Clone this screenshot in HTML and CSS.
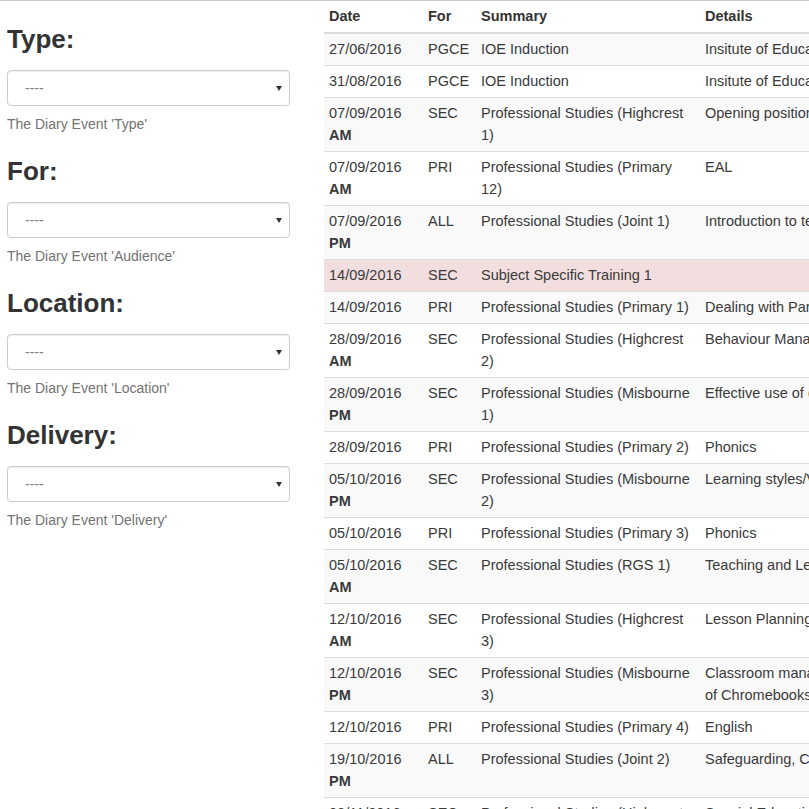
FILE: index.html
```html
<!DOCTYPE html>
<html lang="en">
<head>
<meta charset="utf-8">
<title>Diary Events</title>
<link rel="stylesheet" href="styles.css">
</head>
<body>
<div class="layout">
  <aside class="filters">
    <div class="filter-group">
      <h3 class="filter-title">Type:</h3>
      <div class="select"><span class="select-value">----</span><svg class="select-arrow" width="6" height="5" viewBox="0 0 6 5"><polygon points="0,0 6,0 3,5"/></svg></div>
      <p class="help">The Diary Event 'Type'</p>
    </div>
    <div class="filter-group">
      <h3 class="filter-title">For:</h3>
      <div class="select"><span class="select-value">----</span><svg class="select-arrow" width="6" height="5" viewBox="0 0 6 5"><polygon points="0,0 6,0 3,5"/></svg></div>
      <p class="help">The Diary Event 'Audience'</p>
    </div>
    <div class="filter-group">
      <h3 class="filter-title">Location:</h3>
      <div class="select"><span class="select-value">----</span><svg class="select-arrow" width="6" height="5" viewBox="0 0 6 5"><polygon points="0,0 6,0 3,5"/></svg></div>
      <p class="help">The Diary Event 'Location'</p>
    </div>
    <div class="filter-group">
      <h3 class="filter-title">Delivery:</h3>
      <div class="select"><span class="select-value">----</span><svg class="select-arrow" width="6" height="5" viewBox="0 0 6 5"><polygon points="0,0 6,0 3,5"/></svg></div>
      <p class="help">The Diary Event 'Delivery'</p>
    </div>
  </aside>
  <main class="table-wrap">
    <table class="events">
      <colgroup>
        <col class="col-date">
        <col class="col-for">
        <col class="col-summary">
        <col class="col-details">
      </colgroup>
      <thead>
        <tr><th>Date</th><th>For</th><th>Summary</th><th>Details</th></tr>
      </thead>
      <tbody>
        <tr><td>27/06/2016</td><td>PGCE</td><td>IOE Induction</td><td>Insitute of Education</td></tr>
        <tr><td>31/08/2016</td><td>PGCE</td><td>IOE Induction</td><td>Insitute of Education</td></tr>
        <tr><td>07/09/2016 <b>AM</b></td><td>SEC</td><td>Professional Studies (Highcrest 1)</td><td>Opening positions</td></tr>
        <tr><td>07/09/2016 <b>AM</b></td><td>PRI</td><td>Professional Studies (Primary 12)</td><td>EAL</td></tr>
        <tr><td>07/09/2016 <b>PM</b></td><td>ALL</td><td>Professional Studies (Joint 1)</td><td>Introduction to teaching</td></tr>
        <tr class="danger"><td>14/09/2016</td><td>SEC</td><td>Subject Specific Training 1</td><td></td></tr>
        <tr><td>14/09/2016</td><td>PRI</td><td>Professional Studies (Primary 1)</td><td>Dealing with Parents</td></tr>
        <tr><td>28/09/2016 <b>AM</b></td><td>SEC</td><td>Professional Studies (Highcrest 2)</td><td>Behaviour Management</td></tr>
        <tr><td>28/09/2016 <b>PM</b></td><td>SEC</td><td>Professional Studies (Misbourne 1)</td><td>Effective use of questioning</td></tr>
        <tr><td>28/09/2016</td><td>PRI</td><td>Professional Studies (Primary 2)</td><td>Phonics</td></tr>
        <tr><td>05/10/2016 <b>PM</b></td><td>SEC</td><td>Professional Studies (Misbourne 2)</td><td>Learning styles/VAK</td></tr>
        <tr><td>05/10/2016</td><td>PRI</td><td>Professional Studies (Primary 3)</td><td>Phonics</td></tr>
        <tr><td>05/10/2016 <b>AM</b></td><td>SEC</td><td>Professional Studies (RGS 1)</td><td>Teaching and Learning</td></tr>
        <tr><td>12/10/2016 <b>AM</b></td><td>SEC</td><td>Professional Studies (Highcrest 3)</td><td>Lesson Planning</td></tr>
        <tr><td>12/10/2016 <b>PM</b></td><td>SEC</td><td>Professional Studies (Misbourne 3)</td><td>Classroom management and use of Chromebooks</td></tr>
        <tr><td>12/10/2016</td><td>PRI</td><td>Professional Studies (Primary 4)</td><td>English</td></tr>
        <tr><td>19/10/2016 <b>PM</b></td><td>ALL</td><td>Professional Studies (Joint 2)</td><td>Safeguarding, Child Protection</td></tr>
        <tr><td>02/11/2016 <b>AM</b></td><td>SEC</td><td>Professional Studies (Highcrest 4)</td><td>Special Educational Needs</td></tr>
      </tbody>
    </table>
  </main>
</div>
</body>
</html>
```
FILE: styles.css
```css
html, body {
  margin: 0;
  padding: 0;
}

body {
  border-top: 1px solid #cccccc;
  font-family: "Liberation Sans", Arial, Helvetica, sans-serif;
  font-size: 14px;
  color: #333333;
  background: #ffffff;
  overflow: hidden;
}

.layout {
  display: flex;
  align-items: flex-start;
  padding-left: 7px;
}

.filters {
  flex: none;
  width: 283px;
  display: flex;
  flex-direction: column;
  gap: 23px;
  padding-top: 24px;
}

.filter-group {
  display: flex;
  flex-direction: column;
}

.filter-title {
  margin: 0 0 16px;
  font-size: 26px;
  line-height: 29px;
  font-weight: bold;
  color: #333333;
}

.select {
  box-sizing: border-box;
  height: 36px;
  border: 1px solid #cccccc;
  border-radius: 4px;
  box-shadow: inset 0 1px 1px rgba(0, 0, 0, 0.075);
  display: flex;
  align-items: center;
  justify-content: space-between;
  padding: 0 7px 0 17px;
  background: #ffffff;
}

.select-value {
  color: #808080;
  font-size: 14px;
  line-height: 20px;
}

.select-arrow {
  display: block;
  fill: #333333;
}

.help {
  margin: 8px 0 0;
  color: #737373;
  line-height: 20px;
}

.table-wrap {
  flex: 1;
  min-width: 0;
  margin-left: 34px;
  overflow: hidden;
}

.events {
  border-collapse: separate;
  border-spacing: 0;
  table-layout: fixed;
  width: 601px;
  font-size: 14.5px;
}

.col-date { width: 99px; }
.col-for { width: 53px; }
.col-summary { width: 224px; }
.col-details { width: 225px; }

.events th,
.events td {
  padding: 4px 5px 5px;
  line-height: 22px;
  text-align: left;
  vertical-align: top;
}

.events th {
  font-weight: bold;
  border-bottom: 2px solid #dddddd;
}

.events td {
  border-top: 1px solid #dddddd;
  color: #3a3a3a;
}

.events tbody tr:first-child td {
  border-top: 0;
}

.events tbody tr:nth-child(odd) td {
  background: #f9f9f9;
}

.events tbody tr.danger td {
  background: #f2dede;
}
```
